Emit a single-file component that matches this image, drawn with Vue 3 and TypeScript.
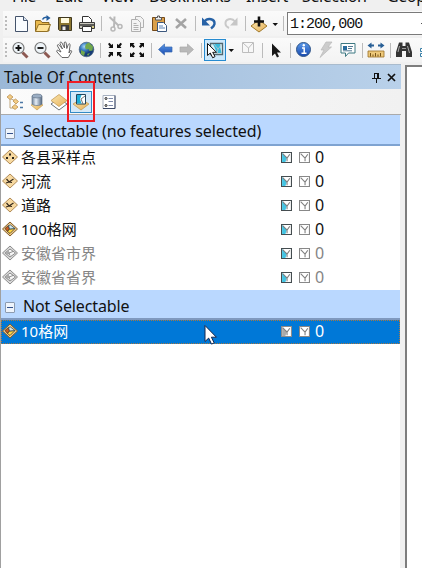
<script setup lang="ts">
interface Tool { id: string; w?: number; kind?: 'sep' | 'active' }
interface Layer { name: string; icon: string; muted?: boolean; selected?: boolean }

const sep = (w: number): Tool => ({ id: '', w, kind: 'sep' })

const menus = [
  { label: 'File', w: 43 }, { label: 'Edit', w: 46 }, { label: 'View', w: 48 },
  { label: 'Bookmarks', w: 97 }, { label: 'Insert', w: 56 },
  { label: 'Selection', w: 85 }, { label: 'Geoprocessing', w: 120 },
]
const standard: Tool[] = [
  { id: 'new' }, { id: 'open' }, { id: 'save' }, { id: 'print' }, sep(6),
  { id: 'cut' }, { id: 'copy' }, { id: 'paste' }, { id: 'delete' }, sep(6),
  { id: 'undo' }, { id: 'redo' }, sep(6), { id: 'add' }, { id: 'caret', w: 10 }, sep(7),
]
const tools: Tool[] = [
  { id: 'zoomin' }, { id: 'zoomout' }, { id: 'hand' }, { id: 'globe' }, sep(7),
  { id: 'shrink' }, { id: 'expand' }, sep(6), { id: 'back' }, { id: 'forward' }, sep(6),
  { id: 'select', w: 22, kind: 'active' }, { id: 'caret', w: 10 }, { id: 'clear', w: 23 }, sep(6),
  { id: 'pointer' }, sep(6), { id: 'info' }, { id: 'bolt' }, { id: 'popup' }, sep(6),
  { id: 'measure' }, sep(6), { id: 'find' }, { id: 'next', w: 20 },
]
const groups: { title: string; layers: Layer[] }[] = [
  {
    title: 'Selectable (no features selected)',
    layers: [
      { name: '各县采样点', icon: 'points' },
      { name: '河流', icon: 'line' },
      { name: '道路', icon: 'line' },
      { name: '100格网', icon: 'polygon' },
      { name: '安徽省市界', icon: 'polygon-off', muted: true },
      { name: '安徽省省界', icon: 'polygon-off', muted: true },
    ],
  },
  { title: 'Not Selectable', layers: [{ name: '10格网', icon: 'polygon', selected: true }] },
]
</script>

<template>
  <div class="window">
    <svg class="defs" width="0" height="0">
      <linearGradient id="gold" x2="1" y2="1"><stop stop-color="#fbe6ae" /><stop offset="1" stop-color="#e5b058" /></linearGradient>
      <linearGradient id="blue" x2="0" y2="1"><stop stop-color="#5c9bea" /><stop offset="1" stop-color="#1748ae" /></linearGradient>
      <radialGradient id="sea" cx=".35" cy=".3"><stop stop-color="#a8d8f5" /><stop offset=".5" stop-color="#3b80c6" /><stop offset="1" stop-color="#173c77" /></radialGradient>
      <linearGradient id="steel"><stop stop-color="#6f8299" /><stop offset=".4" stop-color="#e5eef8" /><stop offset="1" stop-color="#50647d" /></linearGradient>
      <symbol id="new" viewBox="0 0 20 20"><path d="M4.500 2.500h8l4 4v11h-12z" fill="#f9fcff" stroke="#44536b" /><path d="M12.500 2.500v4h4" fill="#dbe5f2" stroke="#44536b" /></symbol>
      <symbol id="open" viewBox="0 0 20 20"><path d="M2.500 17V6.500h5l1.500 2h7V17z" fill="#e9b94d" stroke="#8a6822" /><path d="M2.500 17.500l3-7h12l-3 7z" fill="#ffe397" stroke="#927025" /><path d="M9.500 5.500c1-2 3-2.500 5-2" fill="none" stroke="#245e9e" stroke-width="1.600" /><path d="M13.500 1l4 3-4 3z" fill="#245e9e" /></symbol>
      <symbol id="save" viewBox="0 0 20 20"><path d="M3.500 3.500h13v13h-12l-1-1z" fill="#8a7530" stroke="#3f3820" /><path d="M6 4h8v5H6z" fill="#fffbe0" /><path d="M6 11h8v5.500H6z" fill="#3a3a38" /><path d="M7.500 12.500h3v3.500h-3z" fill="#eee" /></symbol>
      <symbol id="print" viewBox="0 0 20 20"><path d="M5.500 9V2.500h6l3 3V9z" fill="#fff" stroke="#333" /><path d="M2.500 8.500h15v6h-15z" fill="#c9c8bd" stroke="#3c3c3c" /><path d="M3 10h14v2H3z" fill="#5c5c58" /><path d="M5.500 12.500h9v5h-9z" fill="#fff" stroke="#333" /><path d="M15 13h2" stroke="#e7d354" /></symbol>
      <symbol id="cut" viewBox="0 0 20 20"><g fill="none" stroke="#b8b8b8" stroke-width="1.500"><path d="M4.500 3l9 8.500M9.500 2.500L9 13" stroke-width="2" /><circle cx="8" cy="15" r="2" /><circle cx="15" cy="12.500" r="2" /></g></symbol>
      <symbol id="copy" viewBox="0 0 20 20"><g fill="#f3f3f3" stroke="#b0b0b0"><path d="M8.500 2.500h5l3 3v8h-8z" /><path d="M4.500 5.500h6l3 3v9h-9z" /><path d="M6.500 9.500h3M6.500 11.500h5M6.500 13.500h5M6.500 15.500h5" /></g></symbol>
      <symbol id="paste" viewBox="0 0 20 20"><path d="M3.500 3.500h12v13h-12z" fill="#dba049" stroke="#754a1a" /><path d="M6.500 6V3.500h2V2h2v1.500h2V6z" fill="#eee" stroke="#555" /><path d="M8.500 8.500h6l3 3v6h-9z" fill="#fff" stroke="#3c587e" /><path d="M10 12h4M10 14h6" stroke="#5d83b4" /></symbol>
      <symbol id="delete" viewBox="0 0 20 20"><path d="M5 5l10 9M15 5L5 14" stroke="#a4a4a4" stroke-width="2.600" /></symbol>
      <symbol id="undo" viewBox="0 0 20 20"><path d="M5 8c4-5 11-3 10.500 2-.3 2-1.500 3-3.500 4.500" fill="none" stroke="#2762a6" stroke-width="2.400" /><path d="M3 3.500v8h8z" fill="#2762a6" /></symbol>
      <symbol id="redo" viewBox="0 0 20 20"><path d="M14.500 8c-4-5-10.500-3-10 2 .2 2 1.300 3 3.500 4" fill="none" stroke="#c9c9c9" stroke-width="2" /><path d="M16.500 3.500v8H9z" fill="#c6c6c6" /></symbol>
      <symbol id="add" viewBox="0 0 20 20"><path d="M2 12l8-6 8 6-8 6z" fill="url(#gold)" stroke="#a17a2c" /><path d="M10 2.500v10M5 7.500h10" stroke="#111" stroke-width="2.600" /></symbol>
      <symbol id="caret" viewBox="0 0 20 20"><path d="M7.500 9h5.500l-2.750 3z" fill="#111" /></symbol>
      <symbol id="zoomin" viewBox="0 0 20 20"><path d="M12.500 12.500l5 5" stroke="#8d5952" stroke-width="3" /><circle cx="8.500" cy="8" r="5.500" fill="#eef4f8" stroke="#777" stroke-width="1.200" /><path d="M5.500 8h6M8.500 5v6" stroke="#111" stroke-width="1.900" /></symbol>
      <symbol id="zoomout" viewBox="0 0 20 20"><path d="M12.500 12.500l5 5" stroke="#8d5952" stroke-width="3" /><circle cx="8.500" cy="8" r="5.500" fill="#eef4f8" stroke="#777" stroke-width="1.200" /><path d="M5.500 8h6" stroke="#111" stroke-width="1.900" /></symbol>
      <symbol id="hand" viewBox="0 0 20 20"><path d="M8 17.500L3 12c-1-1.500.5-2.500 2-1L7 12 3.500 6c-.5-1.500 1-2 2-.5L8.500 9 6 3.500c-.3-1.600 1.500-2 2-.5L10.500 8l-.3-5c.2-1.500 1.800-1.300 2 0l.6 5.500 1.500-4c.6-1.200 2-.8 1.800.6L15 13l1-2c.8-1 2-.4 1.600.8l-3.300 5.700z" fill="#fff" stroke="#555" stroke-width=".9" /></symbol>
      <symbol id="globe" viewBox="0 0 20 20"><circle cx="10.500" cy="9.500" r="7.300" fill="url(#sea)" stroke="#47617b" stroke-width=".7" /><path d="M10 4l3-1.500 4 4-.5 4-3 .5-1-2-2.500.5-1-2.500zM5 10l4 2-1 4-3-2zM11 14l3-1-2 3z" fill="#72a94e" /></symbol>
      <symbol id="shrink" viewBox="0 0 20 20"><path d="M3 4l1.500-1.200L6.500 5 8 3.800V8H3.500l1.300-1.500zM17 4l-1.500-1.200L13.500 5 12 3.800V8h4.500l-1.300-1.500zM3 16l1.500 1.200 2-2.200L8 16.200V12H3.500l1.300 1.500zM17 16l-1.500 1.200-2-2.200-1.500 1.200V12h4.500l-1.300 1.500z" fill="#111" /></symbol>
      <symbol id="expand" viewBox="0 0 20 20"><path d="M3 3h4.500L6.300 4.400 8 6.500 6.500 8 4.500 6 3 7.500zM17 3h-4.500l1.200 1.400L12 6.500 13.500 8l2-2L17 7.500zM3 17h4.500l-1.200-1.400L8 13.500 6.500 12l-2 2L3 12.500zM17 17h-4.500l1.200-1.400-1.700-2.100 1.500-1.500 2 2 1.500-1.500z" fill="#111" /></symbol>
      <symbol id="back" viewBox="0 0 20 20"><path d="M3.500 9.500l6-5.500v3h7.500v5H9.500v3z" fill="url(#blue)" stroke="#3667af" stroke-width=".7" /></symbol>
      <symbol id="forward" viewBox="0 0 20 20"><path d="M16.500 9.500l-6-5.500v3H3v5h7.500v3z" fill="#b9b9b9" stroke="#aaa" stroke-width=".7" /></symbol>
      <symbol id="select" viewBox="0 0 20 20"><path d="M5.500 3.500h12v11h-12z" fill="#dff2f7" stroke="#52666e" stroke-width="1.300" /><path d="M8 4h7v2l1.500 7H12z" fill="#38b9d9" /><path d="M9 4l4 5 4-5M13 9l-1 5" fill="none" stroke="#a4c3cd" /><path d="M2.500 3.500v12l2.800-2.500 2.400 4.800 2.300-1.200-2.300-4.300h3.800z" fill="#fff" stroke="#111" /></symbol>
      <symbol id="clear" viewBox="0 0 20 20"><path d="M4.500 2.500h11v10h-11zM5 3l5.500 5L15 3M10.500 8v4" fill="#f7f7f7" stroke="#bdbdbd" /></symbol>
      <symbol id="pointer" viewBox="0 0 20 20"><path d="M6 3.500v12.500l3-2.500 2 4 2-1-2-4h4z" fill="#171717" /></symbol>
      <symbol id="info" viewBox="0 0 20 20"><circle cx="9.500" cy="9.500" r="7" fill="url(#blue)" stroke="#315688" /><path d="M8 8h2.200v5M7.500 13.200h5" fill="none" stroke="#fff" stroke-width="1.500" /><circle cx="9.800" cy="5.300" r="1.200" fill="#fff" /></symbol>
      <symbol id="bolt" viewBox="0 0 20 20"><path d="M10 2h6l-4 5h3.500L4 17.500 8 10H5z" fill="#ccc" stroke="#b9b9b9" stroke-width=".7" /></symbol>
      <symbol id="popup" viewBox="0 0 20 20"><path d="M3 3.500h14v9.500h-6.500l-3 3.500V13H3z" fill="#fff" stroke="#3d7882" /><path d="M5 6h4v4H5z" fill="#296c9d" /><path d="M10 6.500h5M10 8.500h4M5 10.800h9" stroke="#537993" /></symbol>
      <symbol id="measure" viewBox="0 0 20 20"><path d="M1.500 5.500l4-3v2h2.500v2H5.500v2zM18.500 5.500l-4-3v2H12v2h2.500v2z" fill="#285f96" /><path d="M2 11h16v6H2z" fill="#edc87a" stroke="#9a6f27" stroke-width=".8" /><path d="M4.500 13v3.500M7 14.500v2M9.500 13v3.500M12 14.500v2M14.500 13v3.500" stroke="#775318" /></symbol>
      <symbol id="find" viewBox="0 0 20 20"><path d="M5 2.500h3.500V6h3V2.500H15L18 12v5h-6v-6H8v6H2v-5z" fill="#343434" /><path d="M5.500 6l-1.500 6M13.500 6l2 7" stroke="#aaa" /><path d="M8 8.500h4" stroke="#999" /></symbol>
      <symbol id="next" viewBox="0 0 20 20"><path d="M5.500 8.500h3v3h-3zM5.500 13.500h3v3h-3z" fill="#fff" stroke="#377fa7" /></symbol>
      <symbol id="byorder" viewBox="0 0 20 20"><path d="M5 7v9h6M6 7l5 2" fill="none" stroke="#bea57b" /><g fill="#f3cd86" stroke="#bd9150" stroke-width=".8"><path d="M2 5l3-2.500L8 5 5 7.500zM8 9l2.500-2L13.500 9.500 11 12zM7 15l3-2.500 3 2.500-3 2.500z" /></g><path d="M15 10.500h3M15 15.500h3" stroke="#4c77a5" stroke-width="1.400" /></symbol>
      <symbol id="source" viewBox="0 0 20 20"><path d="M4 13l6-4 6 4-6 5z" fill="url(#gold)" stroke="#c09443" stroke-width=".6" /><path d="M5 4v8c1.500 2 8.500 2 10 0V4z" fill="url(#steel)" stroke="#65758a" stroke-width=".7" /><ellipse cx="10" cy="4" rx="5" ry="2" fill="#9baec4" stroke="#65758a" stroke-width=".7" /></symbol>
      <symbol id="visible" viewBox="0 0 20 20"><path d="M2 12l8-5.500 8 5.500-8 6z" fill="#fff" stroke="#6a737b" /><path d="M2 8.500L10 2.500l8 6-8 6z" fill="url(#gold)" stroke="#c49a54" stroke-width=".8" /></symbol>
      <symbol id="bysel" viewBox="0 0 20 20"><path d="M2 12l8-5 8 5-8 6z" fill="url(#gold)" stroke="#c49a54" stroke-width=".8" /><path d="M5.500 2.500h9v9.500h-9z" fill="#fff" stroke="#24465d" /><path d="M6 3h4.500L9 7l1.500 4.500H6z" fill="#20aed7" /><path d="M14 4l-4 3 2 5" fill="none" stroke="#777" /></symbol>
      <symbol id="options" viewBox="0 0 20 20"><path d="M4 3.500h12v13H4z" fill="#fff" stroke="#a7b0c0" /><path d="M4 16.500h12v-13" fill="none" stroke="#3c4967" /><circle cx="7" cy="6.500" r="1" fill="#fff" stroke="#222" /><circle cx="7" cy="13.500" r="1" fill="#fff" stroke="#222" /><path d="M9.500 6.500H14M9.500 9.500H14M9.500 13.500H14" stroke="#7f8aaa" /></symbol>
      <symbol id="points" viewBox="0 0 20 20"><path d="M2.500 10L10 3l7.500 7-7.500 7z" fill="#f7d9a0" stroke="#b28c57" /><path d="M9 6.500h2v2H9zM6 10h2v2H6zM12 10h2v2h-2z" fill="#29231c" /></symbol>
      <symbol id="line" viewBox="0 0 20 20"><path d="M2.500 10L10 3l7.500 7-7.500 7z" fill="#f7d9a0" stroke="#b28c57" /><path d="M6.500 8l2.500 3 4.500-3M6 12l3-1 3 .5" fill="none" stroke="#35291d" stroke-width="1.200" /></symbol>
      <symbol id="polygon" viewBox="0 0 20 20"><path d="M2.500 10L10 3l7.500 7-7.500 7z" fill="#efc98a" stroke="#805b28" /><path d="M5 9.500l3.500-3 1 3.500-2 2.500z" fill="#c95a20" stroke="#493721" stroke-width=".8" /><path d="M9.500 10l5.500-.5-5 5-2.500-2z" fill="#ffd440" stroke="#443c24" stroke-width=".8" /><path d="M8.500 6.500L10.500 6l4.500 3.500-5.500.5z" fill="#d0e7ee" stroke="#354f5e" stroke-width=".8" /></symbol>
      <symbol id="polygon-off" viewBox="0 0 20 20"><path d="M2.500 10L10 3l7.500 7-7.500 7z" fill="#dcdcdc" stroke="#8b8b8b" /><path d="M5 10l5-4 5.500 4-5.500 4z" fill="#f8f8f8" stroke="#8a8a8a" /><path d="M5 10l3.500-3 1 3-1.500 2z" fill="#aaa" /><path d="M9 10l4-1.500M9 10l1 2.500" stroke="#777" stroke-width=".8" /></symbol>
      <symbol id="box" viewBox="0 0 10 10"><path d="M.5.5h9v9h-9z" fill="#fff" stroke="currentColor" /><path d="M1 1l4.500 4L4 9H1z" fill="var(--wedge)" /><path d="M1.500 1.500L5.500 5.500 8 2M5.500 5.500V8.500" fill="none" stroke="#808080" /></symbol>
    </svg>

    <nav class="menu"><span v-for="m in menus" :key="m.label" :style="{ width: m.w + 'px' }">{{ m.label }}</span></nav>
    <div class="toolbar standard">
      <i class="grip"></i>
      <span v-for="(t, i) in standard" :key="i" :class="['tool', t.kind]" :style="{ width: (t.w ?? 22) + 'px' }">
        <svg v-if="t.id"><use :href="'#' + t.id" /></svg>
      </span>
      <div class="scale">1:200,000<svg viewBox="0 0 8 6"><path d="M1 1l3 3 3-3" /></svg></div>
    </div>
    <div class="toolbar tools">
      <i class="grip"></i>
      <span v-for="(t, i) in tools" :key="i" :class="['tool', t.kind]" :style="{ width: (t.w ?? 22) + 'px' }">
        <svg v-if="t.id"><use :href="'#' + t.id" /></svg>
      </span>
    </div>

    <main>
      <section class="panel">
        <header class="title">
          <span>Table Of Contents</span>
          <svg class="pin" viewBox="0 0 9 11"><path d="M2.500 1v5M2 1.500h5M5.500 1v5M6.500 1v5M0 6.500h9M4.500 7v4" /></svg>
          <svg class="close" viewBox="0 0 9 9"><path d="M1 1l7 7M8 1L1 8" /></svg>
        </header>
        <div class="tabs">
          <svg><use href="#byorder" /></svg>
          <svg><use href="#source" /></svg>
          <svg><use href="#visible" /></svg>
          <span class="current"><svg><use href="#bysel" /></svg><i class="highlight"></i></span>
          <svg><use href="#options" /></svg>
        </div>
        <div class="tree">
          <template v-for="g in groups" :key="g.title">
            <div class="group"><i class="toggle"></i>{{ g.title }}</div>
            <div v-for="l in g.layers" :key="l.name" :class="['layer', { muted: l.muted, selected: l.selected }]">
              <svg class="kind"><use :href="'#' + l.icon" /></svg>
              <span class="name">{{ l.name }}</span>
              <svg class="box on"><use href="#box" /></svg>
              <svg class="box"><use href="#box" /></svg>
              <span class="count">0</span>
            </div>
          </template>
          <svg class="cursor" viewBox="0 0 14 22"><path d="M1 1.500v16l3.700-3.400 2.800 6 2.700-1.200-2.800-5.700h5z" /></svg>
        </div>
      </section>
      <section class="map"></section>
    </main>
  </div>
</template>

<style>
body { overflow: hidden; background: #f0f0f0; }
</style>
<style scoped>
* { box-sizing: border-box; }
svg { display: block; flex: none; }
.defs { position: absolute; }
.window { width: 422px; height: 568px; display: flex; flex-direction: column; overflow: hidden; background: #f0f0f0; color: #111; font-family: "Noto Sans", "Noto Sans CJK SC", sans-serif; }
.menu { height: 11px; flex: none; display: flex; align-items: flex-end; padding: 0 0 4px 12px; overflow: hidden; font-size: 16px; line-height: 22px; letter-spacing: -.4px; white-space: nowrap; }
.menu span { flex: none; }
.toolbar { display: flex; align-items: center; flex: none; background: linear-gradient(#fafafa, #f3f3f3); }
.standard { height: 25px; margin-left: 3px; }
.tools { height: 24px; margin: 2px 0 2px 3px; }
.grip { width: 7px; height: 15px; flex: none; background: repeating-linear-gradient(#bbb 0 2px, transparent 2px 4px) 2px 0 / 2px 100% no-repeat; }
.tools .grip { width: 6px; }
.tool { height: 22px; display: flex; align-items: center; justify-content: center; flex: none; }
.tool svg { width: 20px; height: 20px; }
.sep::after { content: ''; width: 1px; height: 15px; background: #bbb; }
.active { border: 1px solid #278bd0; background: #cce8fb; }
.scale { width: 150px; height: 23px; flex: none; display: flex; align-items: center; border: 1px solid #7a7a7a; background: #fff; padding: 2px 0 0 2px; font-family: "Liberation Mono", monospace; font-size: 15px; letter-spacing: -.98px; }
.scale svg { width: 8px; height: 6px; margin-left: 58px; fill: none; stroke: #555; }
main { flex: 1; display: flex; }
.panel { width: 401px; display: flex; flex-direction: column; border-left: 1px solid #a0a0a0; }
.title { height: 25px; display: flex; align-items: center; margin-left: -1px; padding: 0 4px 0; border-top: 1px solid #a9bbcd; background: linear-gradient(90deg, #9bb8d7, #b9d1ea); font-size: 15.5px; letter-spacing: .05px; }
.title span { flex: 1; }
.title path { fill: none; stroke: #111; }
.pin { width: 9px; height: 11px; margin-right: 6px; }
.close { width: 9px; height: 9px; margin-right: 1px; stroke-width: 1.700; }
.tabs { height: 26px; display: flex; align-items: center; padding-left: 4px; gap: 2px; background: linear-gradient(90deg, #fbfbfb, #f1f1f1); border-bottom: 1px solid #aaa; }
.tabs svg { width: 20px; height: 20px; }
.current { position: relative; width: 22px; height: 22px; margin: 0 5px 0 -1px; display: grid; place-items: center; border: 1px solid #338ac6; background: #d5e9f8; }
.highlight { position: absolute; left: -4px; top: -11px; width: 28px; height: 41px; border: 2px solid #ef1c24; z-index: 1; }
.tree { flex: 1; position: relative; margin-right: 1px; background: #fff; font-size: 15px; }
.group { height: 31px; display: flex; align-items: center; border-bottom: 2px solid #7fa3d1; background: #bad8ff; padding-left: 4px; padding-top: 3px; font-size: 16px; letter-spacing: -.13px; }
.layer + .group { height: 30px; border-bottom-color: #7f99bf; }
.toggle { width: 10px; height: 11px; margin: 4px 8px 0 0; border: 1px solid #8c9bb0; border-radius: 1px; background: linear-gradient(#33518c, #33518c) center / 6px 1px no-repeat #eef4fc; }
.layer { height: 24px; display: flex; align-items: center; padding-bottom: 2px; }
.kind { width: 20px; height: 20px; margin-left: -1px; }
.name { width: 261px; padding: 0 0 2px 1px; }
.box { width: 11px; height: 11px; margin: 1px 7px 0 0; color: #888; --wedge: #fff; }
.box.on { color: #454d50; --wedge: #43c4e3; }
.count { margin-left: -2px; font-size: 16px; line-height: 20px; }
.muted { color: #858585; }
.muted .box.on { color: #454d50; }
.selected { background: #0078d7; color: #fff; outline: 1px dotted #a87942; outline-offset: -1px; }
.selected .box.on { color: #8c8c8c; --wedge: #aaa; }
.cursor { position: absolute; left: 203px; top: 209px; width: 14px; height: 22px; }
.cursor path { fill: #fff; stroke: #16264c; }
.map { flex: 1; margin: 1px 0 0 4px; border: solid #7d7d7d; border-width: 2px 0 0 2px; background: #fff; }
</style>
